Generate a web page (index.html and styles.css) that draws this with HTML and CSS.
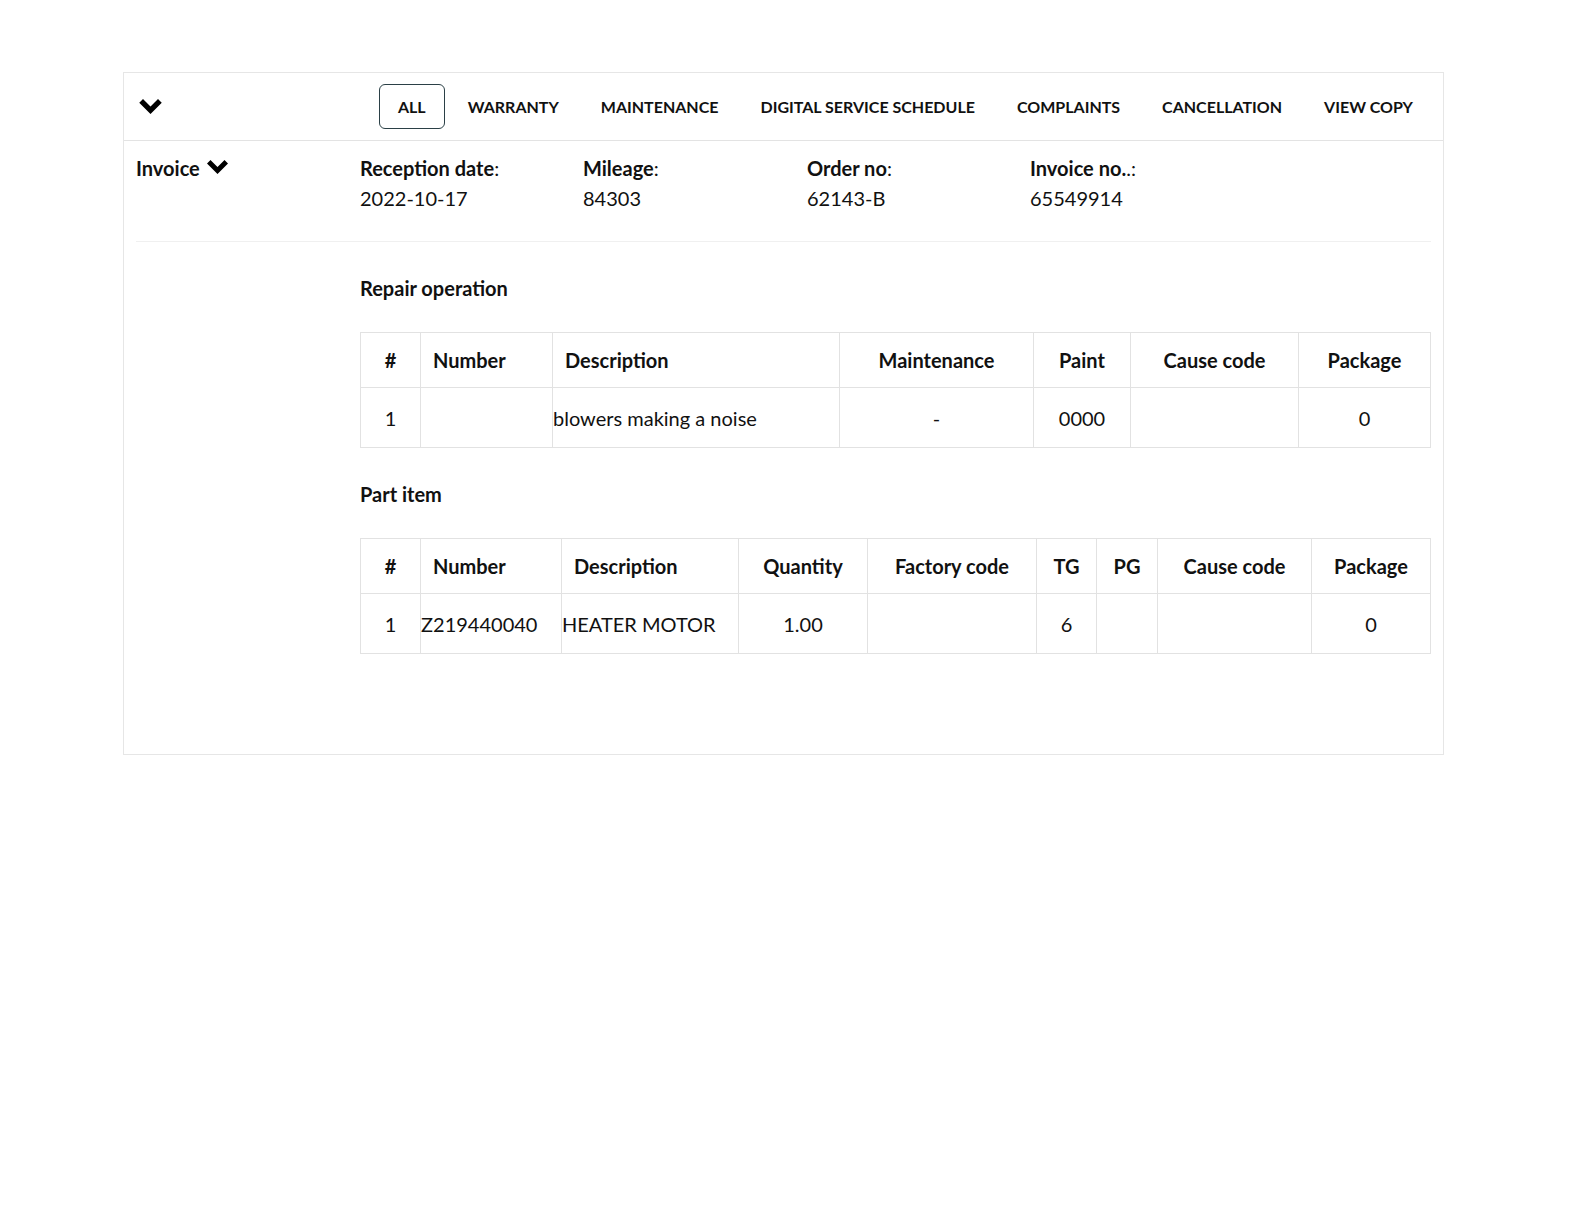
FILE: index.html
```html
<!DOCTYPE html>
<html lang="en">
<head>
  <meta charset="UTF-8">
  <title>Invoice</title>
  <link rel="stylesheet" href="styles.css">
</head>
<body>
  <div class="card">
    <!-- Top bar: collapse toggle + filter tabs -->
    <div class="card-header">
      <span class="chevron big">
        <svg viewBox="0 0 24 16"><polygon points="0,4 4,0 12,8 20,0 24,4 12,16"/></svg>
      </span>
      <div class="tabs">
        <button class="tab active">ALL</button>
        <button class="tab">WARRANTY</button>
        <button class="tab">MAINTENANCE</button>
        <button class="tab">DIGITAL SERVICE SCHEDULE</button>
        <button class="tab">COMPLAINTS</button>
        <button class="tab">CANCELLATION</button>
        <button class="tab">VIEW COPY</button>
      </div>
    </div>

    <div class="card-body">
      <div class="info-row">
        <div class="doc-type">Invoice
          <span class="chevron small">
            <svg viewBox="0 0 24 16"><polygon points="0,4 4,0 12,8 20,0 24,4 12,16"/></svg>
          </span>
        </div>
        <div class="info">
          <div class="label">Reception date<span class="colon">:</span></div>
          <div class="value">2022-10-17</div>
        </div>
        <div class="info">
          <div class="label">Mileage<span class="colon">:</span></div>
          <div class="value">84303</div>
        </div>
        <div class="info">
          <div class="label">Order no<span class="colon">:</span></div>
          <div class="value">62143-B</div>
        </div>
        <div class="info">
          <div class="label">Invoice no.<span class="colon">.:</span></div>
          <div class="value">65549914</div>
        </div>
      </div>

      <div class="details">
        <h4 class="section-title">Repair operation</h4>
        <table class="data-table">
          <colgroup>
            <col class="w60"><col class="w132"><col class="w287"><col class="w194"><col class="w97"><col class="w168"><col>
          </colgroup>
          <thead>
            <tr>
              <th class="center">#</th>
              <th>Number</th>
              <th>Description</th>
              <th class="center">Maintenance</th>
              <th class="center">Paint</th>
              <th class="center">Cause code</th>
              <th class="center">Package</th>
            </tr>
          </thead>
          <tbody>
            <tr>
              <td class="center">1</td>
              <td></td>
              <td>blowers making a noise</td>
              <td class="center">-</td>
              <td class="center">0000</td>
              <td></td>
              <td class="center">0</td>
            </tr>
          </tbody>
        </table>

        <h4 class="section-title">Part item</h4>
        <table class="data-table">
          <colgroup>
            <col class="w60"><col class="w141"><col class="w177"><col class="w129"><col class="w169"><col class="w60"><col class="w61"><col class="w154"><col>
          </colgroup>
          <thead>
            <tr>
              <th class="center">#</th>
              <th>Number</th>
              <th>Description</th>
              <th class="center">Quantity</th>
              <th class="center">Factory code</th>
              <th class="center">TG</th>
              <th class="center">PG</th>
              <th class="center">Cause code</th>
              <th class="center">Package</th>
            </tr>
          </thead>
          <tbody>
            <tr>
              <td class="center">1</td>
              <td>Z219440040</td>
              <td>HEATER MOTOR</td>
              <td class="center">1.00</td>
              <td></td>
              <td class="center">6</td>
              <td></td>
              <td></td>
              <td class="center">0</td>
            </tr>
          </tbody>
        </table>
      </div>
    </div>
  </div>
</body>
</html>
```

FILE: styles.css
```css
/* General */
body {
  margin: 0;
  padding: 0;
  font-family: 'Lato', 'Open Sans', sans-serif;
  color: #111;
  background: #fff;
}

.card {
  width: 1321px;
  box-sizing: border-box;
  margin: 72px 0 0 123px;
  border: 1px solid #e6e6e6;
  padding-bottom: 100px;
}

/* Header */
.card-header {
  display: flex;
  align-items: center;
  justify-content: space-between;
  height: 67px;
  padding: 0 11px 0 15px;
  border-bottom: 1px solid #e3e3e3;
}

.chevron {
  display: inline-flex;
}

.chevron svg {
  fill: #000;
}

.chevron.big svg {
  width: 23px;
  height: 15px;
}

.chevron.small svg {
  width: 21px;
  height: 14px;
  margin-left: 2px;
  position: relative;
  top: -2px;
}

.tabs {
  display: flex;
  gap: 4px;
}

.tab {
  height: 45px;
  padding: 0 18px;
  background: none;
  border: 1px solid transparent;
  border-radius: 6px;
  font-family: inherit;
  font-size: 16px;
  font-weight: 700;
  color: #111;
  cursor: pointer;
}

.tab.active {
  border-color: #2b4046;
}

/* Body */
.card-body {
  padding: 0 12px;
}

.info-row {
  display: grid;
  grid-template-columns: 224px 223px 224px 223px 1fr;
  padding: 12px 0 28px;
  border-bottom: 1px solid #f0f0f0;
  font-size: 20px;
  line-height: 30px;
}

.doc-type,
.label {
  font-weight: 700;
}

.colon {
  font-weight: 400;
}

.details {
  margin-left: 224px;
}

.section-title {
  margin: 31px 0 29px;
  font-size: 20px;
  line-height: 30px;
  font-weight: 700;
}

/* Tables */
.data-table {
  width: 100%;
  table-layout: fixed;
  border-collapse: collapse;
  font-size: 20px;
}

.data-table th,
.data-table td {
  border: 1px solid #e2e2e2;
  text-align: left;
  white-space: nowrap;
}

.data-table th {
  height: 54px;
  padding: 0 12px;
  font-weight: 700;
}

.data-table td {
  height: 59px;
  padding: 0;
}

.data-table .center {
  text-align: center;
}

.w60 { width: 60px; }
.w61 { width: 61px; }
.w97 { width: 97px; }
.w129 { width: 129px; }
.w132 { width: 132px; }
.w141 { width: 141px; }
.w154 { width: 154px; }
.w168 { width: 168px; }
.w169 { width: 169px; }
.w177 { width: 177px; }
.w194 { width: 194px; }
.w287 { width: 287px; }
```
